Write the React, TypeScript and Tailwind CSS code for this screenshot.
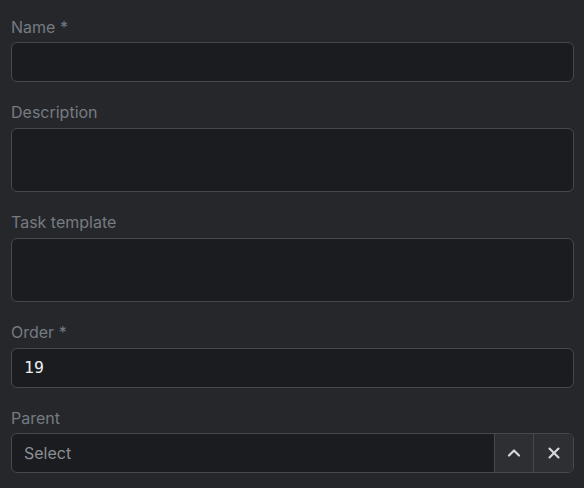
import { ChevronUp, X } from 'lucide-react';

const FONT = "font-['Inter','Noto_Sans',sans-serif]";

function Field({ label, children }: { label: string; children: React.ReactNode }) {
  return (
    <div className="flex flex-col">
      <label className="text-[16px] leading-6 text-[#767b81] mb-[3.5px]">{label}</label>
      {children}
    </div>
  );
}

export default function App() {
  return (
    <div className={`w-[584px] h-[488px] bg-[#25272b] ${FONT} pl-[11px] pr-[10px] pt-[14.5px] overflow-hidden`}>
      <div className="flex flex-col gap-[18px]">
        <Field label="Name *">
          <input className="h-10 w-full rounded-md border border-[#46484c] bg-[#1b1c1f] px-3 text-[16px] text-[#e6e7e9] outline-none" />
        </Field>
        <Field label="Description">
          <textarea className="h-[64.5px] w-full resize-none rounded-md border border-[#46484c] bg-[#1b1c1f] px-3 py-2 text-[16px] text-[#e6e7e9] outline-none" />
        </Field>
        <Field label="Task template">
          <textarea className="h-[64.5px] w-full resize-none rounded-md border border-[#46484c] bg-[#1b1c1f] px-3 py-2 text-[16px] text-[#e6e7e9] outline-none" />
        </Field>
        <Field label="Order *">
          <input
            defaultValue="19"
            className="h-10 w-full rounded-md border border-[#46484c] bg-[#1b1c1f] px-3 font-['DejaVu_Sans_Mono',monospace] text-[16.5px] text-[#eceef0] outline-none"
          />
        </Field>
        <Field label="Parent">
          <div className="flex h-10 w-full overflow-hidden rounded-md border border-[#46484c] bg-[#1b1c1f]">
            <div className="flex flex-1 items-center px-3 text-[16px] text-[#8b8e93]">Select</div>
            <button className="flex w-[39px] items-center justify-center border-l border-[#46484c] bg-[#2e2f32] text-[#d5d8db]">
              <ChevronUp size={20} strokeWidth={2.6} />
            </button>
            <button className="flex w-10 items-center justify-center border-l border-[#46484c] bg-[#2e2f32] text-[#d5d8db]">
              <X size={18} strokeWidth={2.8} />
            </button>
          </div>
        </Field>
      </div>
    </div>
  );
}
